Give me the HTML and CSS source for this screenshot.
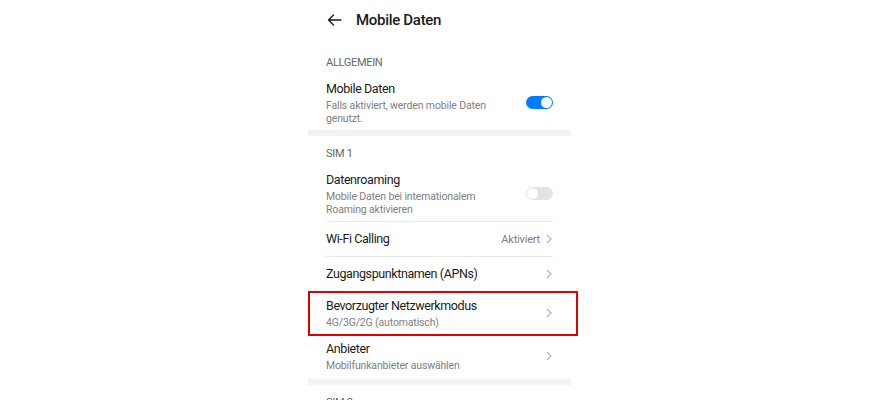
FILE: index.html
```html
<!DOCTYPE html>
<html lang="de">
<head>
    <meta charset="UTF-8">
    <meta name="viewport" content="width=device-width, initial-scale=1.0">
    <title>Mobile Daten</title>
    <link rel="stylesheet" href="styles.css">
</head>
<body>

    <div class="screen">

        <!-- Kopfzeile -->
        <div class="topbar">
            <svg class="back" width="15" height="12" viewBox="0 0 15 12">
                <path d="M14 6H1.5M6.5 1L1.5 6l5 5" fill="none" stroke="#1a1a1a" stroke-width="1.4" stroke-linecap="round" stroke-linejoin="round"/>
            </svg>
            <span class="topbar-title">Mobile Daten</span>
        </div>

        <!-- Allgemein -->
        <div class="section-title first">ALLGEMEIN</div>
        <div class="row">
            <div class="row-text">
                <div class="row-label">Mobile Daten</div>
                <div class="row-sub">Falls aktiviert, werden mobile Daten genutzt.</div>
            </div>
            <span class="switch on"></span>
        </div>

        <div class="gap"></div>

        <!-- SIM 1 -->
        <div class="section-title">SIM 1</div>
        <div class="row divided">
            <div class="row-text">
                <div class="row-label">Datenroaming</div>
                <div class="row-sub">Mobile Daten bei internationalem Roaming aktivieren</div>
            </div>
            <span class="switch"></span>
        </div>
        <div class="row single divided">
            <div class="row-label">Wi-Fi Calling</div>
            <span class="row-value">Aktiviert</span>
            <svg class="chevron" width="6" height="10" viewBox="0 0 6 10"><path d="M1 1l4 4-4 4" fill="none" stroke="#b3b3b3" stroke-width="1.2"/></svg>
        </div>
        <div class="row single divided">
            <div class="row-label">Zugangspunktnamen (APNs)</div>
            <svg class="chevron" width="6" height="10" viewBox="0 0 6 10"><path d="M1 1l4 4-4 4" fill="none" stroke="#b3b3b3" stroke-width="1.2"/></svg>
        </div>
        <div class="row marked divided">
            <div class="row-text">
                <div class="row-label">Bevorzugter Netzwerkmodus</div>
                <div class="row-sub">4G/3G/2G (automatisch)</div>
            </div>
            <svg class="chevron" width="6" height="10" viewBox="0 0 6 10"><path d="M1 1l4 4-4 4" fill="none" stroke="#b3b3b3" stroke-width="1.2"/></svg>
        </div>
        <div class="row last">
            <div class="row-text">
                <div class="row-label">Anbieter</div>
                <div class="row-sub">Mobilfunkanbieter auswählen</div>
            </div>
            <svg class="chevron" width="6" height="10" viewBox="0 0 6 10"><path d="M1 1l4 4-4 4" fill="none" stroke="#b3b3b3" stroke-width="1.2"/></svg>
        </div>

        <div class="gap"></div>

        <!-- SIM 2 -->
        <div class="section-title">SIM 2</div>
    </div>

</body>
</html>
```

FILE: styles.css
```css
body {
    margin: 0;
    background: #fff;
    font-family: Roboto, "Noto Sans", Arial, sans-serif;
    color: #1a1a1a;
    overflow: hidden;
}
.screen {
    width: 263px;
    margin: 0 auto;
}
.topbar {
    height: 40px;
    margin-bottom: 5px;
    padding: 0 18px 0 19px;
    display: flex;
    align-items: center;
}
.back {
    margin-right: 14px;
}
.topbar-title {
    font-size: 15px;
    font-weight: 500;
    letter-spacing: -0.3px;
}
.section-title {
    height: 28px;
    padding: 3px 18px 0;
    display: flex;
    align-items: center;
    font-size: 11px;
    letter-spacing: -0.3px;
    color: #666;
}
.row {
    position: relative;
    margin: 0 18px;
    padding: 4px 0 5px;
    display: flex;
    align-items: center;
}
.row.divided {
    border-bottom: 1px solid #e8e8e8;
}
.row.single {
    height: 34px;
    padding: 0;
}
.row.marked {
    padding: 5px 0;
}
.row.last {
    padding: 5px 0 7px;
}
.row-text {
    flex: 1;
    padding-right: 30px;
}
.row-label {
    flex: 1;
    font-size: 12.5px;
    letter-spacing: -0.4px;
    line-height: 18px;
}
.row-sub {
    margin-top: 1px;
    font-size: 10.5px;
    letter-spacing: -0.15px;
    line-height: 13px;
    color: #808080;
}
.row-value {
    font-size: 11px;
    letter-spacing: -0.2px;
    color: #808080;
    margin-right: 6px;
}
.chevron {
    flex: none;
    margin-right: 1px;
}
.gap {
    height: 6px;
    background: #f3f3f3;
}
.switch {
    position: relative;
    flex: none;
    width: 27px;
    height: 13px;
    border-radius: 7px;
    background: #e3e3e3;
}
.switch::after {
    content: "";
    position: absolute;
    top: 1px;
    left: 1px;
    width: 11px;
    height: 11px;
    border-radius: 50%;
    background: #fff;
}
.switch.on {
    background: #007dff;
}
.switch.on::after {
    left: 15px;
}
/* rote Markierung */
.marked::after {
    content: "";
    position: absolute;
    top: -1px;
    bottom: -2px;
    left: -18px;
    right: -25px;
    border: 2.5px solid #e00000;
}
```
